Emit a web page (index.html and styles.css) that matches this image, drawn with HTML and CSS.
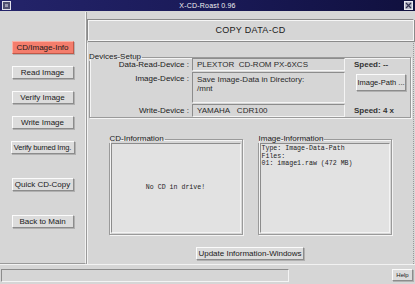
FILE: index.html
```html
<!DOCTYPE html>
<html lang="en">
<head>
    <meta charset="UTF-8">
    <title>X-CD-Roast 0.96</title>
    <link rel="stylesheet" href="styles.css">
</head>
<body>
    <div class="window">
        <div class="titlebar">
            <span class="tb-icon tb-menu"></span>
            <span class="tb-title">X-CD-Roast 0.96</span>
            <svg class="tb-icon tb-close" width="9" height="9" viewBox="0 0 9 9">
                <rect x="0.5" y="0.5" width="8" height="8" fill="#b8b8c8" stroke="#e8e8f0"/>
                <path d="M2 2 L7 7 M7 2 L2 7" stroke="#303050" stroke-width="1.2"/>
            </svg>
        </div>

        <div class="main">
            <!-- left menu -->
            <div class="sidebar">
                <button class="side-btn active">CD/Image-Info</button>
                <button class="side-btn">Read Image</button>
                <button class="side-btn">Verify Image</button>
                <button class="side-btn">Write Image</button>
                <button class="side-btn wide">Verify burned Img.</button>
                <button class="side-btn spaced">Quick CD-Copy</button>
                <button class="side-btn spaced">Back to Main</button>
            </div>

            <div class="content">
                <div class="header">COPY DATA-CD</div>

                <div class="panel">
                    <fieldset class="devices">
                        <legend>Devices-Setup</legend>
                        <div class="dev-grid">
                            <div class="dev-label">Data-Read-Device :</div>
                            <div class="field">PLEXTOR&nbsp; CD-ROM PX-6XCS</div>
                            <div class="speed">Speed: --</div>

                            <div class="dev-label">Image-Device :</div>
                            <div class="field tall">Save Image-Data in Directory:<br>/mnt</div>
                            <div class="path-cell"><button class="btn path-btn">Image-Path ...</button></div>

                            <div class="dev-label mid">Write-Device :</div>
                            <div class="field">YAMAHA&nbsp;&nbsp; CDR100</div>
                            <div class="speed mid">Speed: 4 x</div>
                        </div>
                    </fieldset>

                    <div class="info-row">
                        <fieldset class="info">
                            <legend>CD-Information</legend>
                            <div class="info-text centered">No CD in drive!</div>
                        </fieldset>
                        <fieldset class="info">
                            <legend>Image-Information</legend>
                            <div class="info-text">Type: Image-Data-Path
Files:
01: image1.raw (472 MB)</div>
                        </fieldset>
                    </div>

                    <div class="update-row">
                        <button class="btn update-btn">Update Information-Windows</button>
                    </div>
                </div>
            </div>
        </div>

        <div class="statusbar">
            <div class="status-field"></div>
            <button class="btn help-btn">Help</button>
        </div>
    </div>
</body>
</html>
```

FILE: styles.css
```css
    /* X-CD-Roast copy data window */

    * {
        box-sizing: border-box;
    }

    body {
        margin: 0;
        background: #d6d6d6;
        font-family: "Liberation Sans", Arial, sans-serif;
        font-size: 8px;
        color: #1a1a1a;
    }

    .window {
        width: 415px;
        height: 284px;
        display: flex;
        flex-direction: column;
        background: #d6d6d6;
        overflow: hidden;
    }

    .titlebar {
        height: 11px;
        display: flex;
        align-items: center;
        padding: 0 2px;
        background: linear-gradient(90deg, #24246a 0%, #1a1a58 50%, #10103e 100%);
        color: #f0f0f0;
    }

    .tb-icon {
        width: 9px;
        height: 9px;
        flex: none;
    }

    .tb-menu {
        background: #9a9ab0;
        border: 1px solid #e0e0ea;
        box-shadow: inset 0 0 0 2px #505070;
    }

    .tb-title {
        flex: 1;
        text-align: center;
        font-size: 7px;
        letter-spacing: 0.2px;
        line-height: 11px;
    }

    .main {
        flex: 1;
        display: flex;
        padding-top: 1px;
    }

    /* left menu */

    .sidebar {
        width: 86px;
        display: flex;
        flex-direction: column;
        align-items: center;
        padding-top: 29px;
        gap: 12px;
        border-right: 1px solid #f2f2f2;
        box-shadow: 1px 0 0 #9a9a9a;
        border-bottom: 1px solid #9a9a9a;
    }

    button {
        font-family: inherit;
        font-size: 8px;
        color: #1a1a1a;
        margin: 0;
        padding: 0;
        cursor: default;
    }

    .btn,
    .side-btn {
        background: #dcdcdc;
        border: 1px solid;
        border-color: #fbfbfb #8c8c8c #8c8c8c #fbfbfb;
        box-shadow: 1px 1px 0 #b0b0b0;
        line-height: 11px;
    }

    .side-btn {
        width: 62px;
        height: 13px;
    }

    .side-btn.wide {
        width: 64px;
        font-size: 7.5px;
        letter-spacing: -0.2px;
    }

    .side-btn.active {
        background: #f47d6c;
        border-color: #fbb0a4 #c05848 #c05848 #fbb0a4;
    }

    .side-btn.spaced {
        margin-top: 12px;
    }

    /* right side */

    .content {
        flex: 1;
        display: flex;
        flex-direction: column;
        padding: 7px 1px 0 1px;
    }

    .header {
        height: 22px;
        border: 1px solid;
        border-color: #8a8a8a #f6f6f6 #f6f6f6 #8a8a8a;
        box-shadow: inset 1px 1px 0 #f6f6f6, 1px 1px 0 #8a8a8a;
        display: flex;
        align-items: center;
        justify-content: center;
        font-size: 9px;
        letter-spacing: 0.3px;
    }

    .panel {
        flex: 1;
        margin-top: 2px;
        border-left: 1px solid #f2f2f2;
        border-right: 1px dotted #9a9a9a;
        display: flex;
        flex-direction: column;
        padding: 10px 2px 0 1px;
    }

    fieldset {
        margin: 0;
        border: 1px solid #9a9a9a;
        box-shadow: inset 1px 1px 0 #f4f4f4, 1px 1px 0 #f4f4f4;
    }

    legend {
        font-size: 8px;
        line-height: 8px;
        padding: 0 1px;
        margin-left: -2px;
        margin-bottom: -3px;
    }

    .devices {
        padding: 0;
    }

    .dev-grid {
        display: grid;
        grid-template-columns: 99px 153px 1fr;
        grid-template-rows: 13px 31px 13px;
        column-gap: 3px;
        row-gap: 1px;
    }

    .dev-label {
        text-align: right;
        padding-top: 2px;
        line-height: 9px;
    }

    .field {
        border: 1px solid;
        border-color: #8c8c8c #f4f4f4 #f4f4f4 #8c8c8c;
        padding: 1px 4px;
        line-height: 9px;
        white-space: nowrap;
        overflow: hidden;
        color: #2a2a2a;
    }

    .field.tall {
        padding-top: 2px;
    }

    .speed {
        padding: 2px 0 0 6px;
        font-weight: bold;
        line-height: 9px;
        color: #333;
    }

    .path-cell {
        padding: 2px 0 0 8px;
    }

    .path-btn {
        width: 50px;
        height: 17px;
        font-size: 7.5px;
    }

    .info-row {
        display: flex;
        justify-content: center;
        gap: 15px;
        margin-top: 17px;
    }

    .info {
        width: 134px;
        height: 100px;
        padding: 0 1px 1px 1px;
        display: flex;
        flex-direction: column;
    }

    .info legend {
        margin-bottom: 0;
    }

    .info-text {
        flex: 1;
        background: #e2e2e2;
        border: 1px solid;
        border-color: #8c8c8c #f4f4f4 #f4f4f4 #8c8c8c;
        font-family: "Liberation Mono", "DejaVu Sans Mono", monospace;
        font-size: 6.6px;
        line-height: 7.5px;
        white-space: pre;
        padding: 1px;
        color: #222;
    }

    .info-text.centered {
        display: flex;
        align-items: center;
        justify-content: center;
    }

    .update-row {
        display: flex;
        justify-content: center;
        margin-top: 12px;
    }

    .update-btn {
        width: 108px;
        height: 13px;
    }

    /* bottom status */

    .statusbar {
        height: 20px;
        display: flex;
        align-items: center;
        justify-content: space-between;
        padding: 1px 2px 0 1px;
        border-top: 1px solid #f2f2f2;
    }

    .status-field {
        width: 288px;
        height: 13px;
        border: 1px solid;
        border-color: #8c8c8c #f4f4f4 #f4f4f4 #8c8c8c;
    }

    .help-btn {
        width: 21px;
        height: 12px;
        font-size: 6px;
    }
```
